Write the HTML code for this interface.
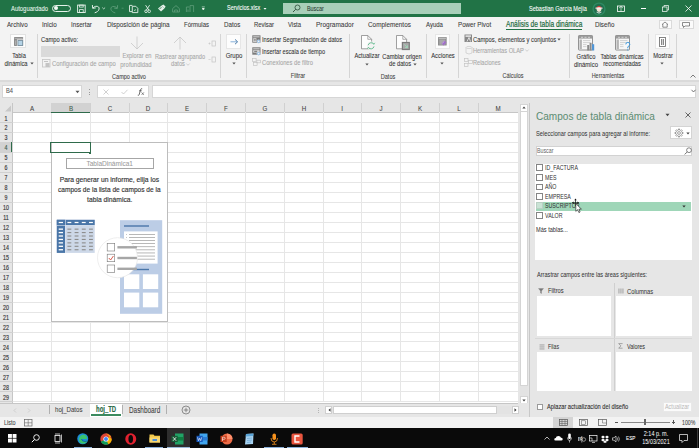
<!DOCTYPE html>
<html><head><meta charset="utf-8"><style>
html,body{margin:0;padding:0;}
body{width:699px;height:448px;overflow:hidden;position:relative;background:#fff;font-family:"Liberation Sans",sans-serif;}
.a{position:absolute;}
.t{position:absolute;white-space:nowrap;font-family:"Liberation Sans",sans-serif;}
svg{overflow:visible;}
</style></head><body>
<div class="a" style="left:0px;top:0px;width:699px;height:16.5px;background:#217346;"></div>
<div class="t" style="top:4.2px;font-size:7.375px;line-height:9.59px;color:#e8f4ec;-webkit-text-stroke:0.08px #e8f4ec;left:11px;transform-origin:0 50%;transform:scaleX(0.8);">Autoguardado</div>
<div class="a" style="left:51.6px;top:4.5px;width:19.0px;height:7.5px;border:1.0px solid #e4f1e9;box-sizing:border-box;border-radius:4px;"></div>
<div class="a" style="left:54.0px;top:6.2px;width:4.1px;height:4.1px;background:#f4faf6;border-radius:50%;"></div>
<svg class="a" style="left:0px;top:0px;" width="699" height="16" viewBox="0 0 699 16">
<rect x="77.6" y="5.1" width="7.6" height="7.4" fill="none" stroke="#e4f1e9" stroke-width="0.95"/>
<rect x="79.6" y="5.1" width="3.6" height="2.0" fill="none" stroke="#e4f1e9" stroke-width="0.8"/>
<rect x="79.6" y="9.6" width="3.6" height="2.9" fill="none" stroke="#e4f1e9" stroke-width="0.8"/>
<path d="M92.4 5.0 L92.7 8.3 L95.8 7.9" fill="none" stroke="#e4f1e9" stroke-width="0.95"/>
<path d="M92.9 8.1 C94.8 5.4 99.6 5.6 99.1 9.0 C98.8 11.0 96.6 12.3 94.7 12.8" fill="none" stroke="#e4f1e9" stroke-width="0.95"/>
<path d="M102.3 7.6 L103.7 8.9 L105.1 7.6" fill="none" stroke="#e4f1e9" stroke-width="0.75"/>
<path d="M117.6 5.2 L117.3 8.5 L114.2 8.1" fill="none" stroke="#5c9c78" stroke-width="0.9"/>
<path d="M117.1 8.3 C115.2 5.6 110.4 5.8 110.9 9.2 C111.2 11.2 113.4 12.5 115.3 12.9" fill="none" stroke="#5c9c78" stroke-width="0.9"/>
<path d="M121.6 8.2 L123.6 8.2" stroke="#5c9c78" stroke-width="0.7"/>
<path d="M132.4 5.4 L129.5 5.4 L129.5 11.6 L132.0 11.6" fill="none" stroke="#e4f1e9" stroke-width="0.9"/>
<path d="M132.3 6.3 L135.8 6.3 L137.8 8.3 L137.8 12.6 L132.3 12.6 Z" fill="none" stroke="#e4f1e9" stroke-width="0.9"/>
<path d="M134.0 10.6 L136.0 9.6" stroke="#e4f1e9" stroke-width="0.7"/>
<path d="M145.6 5.2 L148.8 10.0 M149.6 5.2 L146.4 10.0" stroke="#e4f1e9" stroke-width="0.9" fill="none"/>
<circle cx="146.0" cy="11.3" r="1.3" fill="none" stroke="#e4f1e9" stroke-width="0.85"/>
<circle cx="149.2" cy="11.3" r="1.3" fill="none" stroke="#e4f1e9" stroke-width="0.85"/>
<path d="M158.0 8.4 L161.6 5.6 L164.4 8.6 L161.0 11.6 Z" fill="#e4f1e9"/>
<path d="M161.6 5.6 L163.4 4.4 L165.6 6.5 L164.4 8.6" fill="#e4f1e9"/>
<path d="M159.6 8.6 L161.6 7.6" stroke="#217346" stroke-width="0.8"/>
<path d="M172.6 12 L172.6 8.6 L176 5.6 L179.4 8.6 L179.4 12 Z M174.6 12 L174.6 10 L177.4 10 L177.4 12" fill="none" stroke="#5c9c78" stroke-width="0.85"/>
<path d="M186.4 12 L186.4 7 L189 7 M190 12 L190 5.6 L193.6 5.6 L193.6 12 M188 9.5 L188 12" fill="none" stroke="#5c9c78" stroke-width="0.85"/>
<path d="M201.8 6.9 L204.8 6.9" stroke="#e4f1e9" stroke-width="0.6"/>
<path d="M202.0 8.0 L204.6 8.0 L204.2 9.6 L203.3 10.0 L202.4 9.6 Z" fill="#e4f1e9"/>
</svg>
<div class="t" style="top:4.28px;font-size:6.875px;line-height:8.94px;color:#ffffff;-webkit-text-stroke:0.08px #ffffff;left:226.5px;transform-origin:0 50%;transform:scaleX(0.8);">Servicios.xlsx</div>
<svg class="a" style="left:263px;top:6.5px;" width="4" height="4" viewBox="0 0 4 4"><path d="M0.5 1 L3.5 1 L2 2.8 Z" fill="#fff"/></svg>
<div class="a" style="left:283px;top:2.8px;width:178px;height:11.4px;background:#a8cfb9;"></div>
<svg class="a" style="left:291.5px;top:3.8px;" width="9" height="9" viewBox="0 0 9 9"><circle cx="5.5" cy="3.5" r="2.5" fill="none" stroke="#2b4a38" stroke-width="0.8"/><path d="M3.7 5.3 L1 8" stroke="#2b4a38" stroke-width="0.9"/></svg>
<div class="t" style="top:4.65px;font-size:6.75px;line-height:8.78px;color:#2a3d32;-webkit-text-stroke:0.08px #2a3d32;left:307.4px;transform-origin:0 50%;transform:scaleX(0.8);">Buscar</div>
<div class="t" style="top:4.25px;font-size:6.938px;line-height:9.02px;color:#ffffff;-webkit-text-stroke:0.08px #ffffff;left:529px;transform-origin:0 50%;transform:scaleX(0.8);">Sebastian García Mejía</div>
<svg class="a" style="left:591.5px;top:1.5px;" width="14" height="14" viewBox="0 0 14 14"><circle cx="7" cy="7" r="6.6" fill="#2e8a62"/><circle cx="7" cy="7" r="5.2" fill="#1f6e4c"/><path d="M3.6 6.2 Q7 1.2 10.4 6.2 Z" fill="#d8383a"/><circle cx="7" cy="7.6" r="2.4" fill="#f1e3d3"/><path d="M3.8 9.6 Q7 13.6 10.2 9.6 Q7 11.4 3.8 9.6 Z" fill="#f4f4f4"/><rect x="3.5" y="5.6" width="7" height="1.1" fill="#f4f4f4"/></svg>
<svg class="a" style="left:616.5px;top:4.5px;" width="8" height="8" viewBox="0 0 8 8"><rect x="0.5" y="1" width="7" height="5.5" fill="none" stroke="#fff" stroke-width="0.8"/><path d="M4 1 L4 6.5 M2 3 L4 1.5 L6 3" fill="none" stroke="#fff" stroke-width="0.6"/></svg>
<div class="a" style="left:641px;top:8px;width:4.8px;height:0.8px;background:#fff;"></div>
<svg class="a" style="left:661.5px;top:4.5px;" width="7" height="7" viewBox="0 0 7 7"><rect x="0.5" y="2" width="4.5" height="4.5" fill="none" stroke="#fff" stroke-width="0.7"/><path d="M2 2 L2 0.5 L6.5 0.5 L6.5 5 L5 5" fill="none" stroke="#fff" stroke-width="0.7"/></svg>
<svg class="a" style="left:684.5px;top:4.5px;" width="7" height="7" viewBox="0 0 7 7"><path d="M0.5 0.5 L6.5 6.5 M6.5 0.5 L0.5 6.5" stroke="#fff" stroke-width="0.8"/></svg>
<div class="a" style="left:0px;top:16.5px;width:699px;height:63.2px;background:#f3f3f3;"></div>
<div class="t" style="top:20.2px;font-size:7.725px;line-height:10.04px;color:#3b3b3b;-webkit-text-stroke:0.08px #3b3b3b;left:6.9px;transform-origin:0 50%;transform:scaleX(0.8);">Archivo</div>
<div class="t" style="top:20.11px;font-size:7.875px;line-height:10.24px;color:#3b3b3b;-webkit-text-stroke:0.08px #3b3b3b;left:42px;transform-origin:0 50%;transform:scaleX(0.8);">Inicio</div>
<div class="t" style="top:20.21px;font-size:7.7px;line-height:10.01px;color:#3b3b3b;-webkit-text-stroke:0.08px #3b3b3b;left:70.9px;transform-origin:0 50%;transform:scaleX(0.8);">Insertar</div>
<div class="t" style="top:20.04px;font-size:8.0px;line-height:10.4px;color:#3b3b3b;-webkit-text-stroke:0.08px #3b3b3b;left:106.9px;transform-origin:0 50%;transform:scaleX(0.8);">Disposición de página</div>
<div class="t" style="top:20.33px;font-size:7.5px;line-height:9.75px;color:#3b3b3b;-webkit-text-stroke:0.08px #3b3b3b;left:184px;transform-origin:0 50%;transform:scaleX(0.8);">Fórmulas</div>
<div class="t" style="top:20.15px;font-size:7.8px;line-height:10.14px;color:#3b3b3b;-webkit-text-stroke:0.08px #3b3b3b;left:223.7px;transform-origin:0 50%;transform:scaleX(0.8);">Datos</div>
<div class="t" style="top:20.37px;font-size:7.412px;line-height:9.64px;color:#3b3b3b;-webkit-text-stroke:0.08px #3b3b3b;left:253.8px;transform-origin:0 50%;transform:scaleX(0.8);">Revisar</div>
<div class="t" style="top:20.39px;font-size:7.375px;line-height:9.59px;color:#3b3b3b;-webkit-text-stroke:0.08px #3b3b3b;left:288px;transform-origin:0 50%;transform:scaleX(0.8);">Vista</div>
<div class="t" style="top:19.98px;font-size:8.1px;line-height:10.53px;color:#3b3b3b;-webkit-text-stroke:0.08px #3b3b3b;left:316px;transform-origin:0 50%;transform:scaleX(0.8);">Programador</div>
<div class="t" style="top:20.05px;font-size:7.975px;line-height:10.37px;color:#3b3b3b;-webkit-text-stroke:0.08px #3b3b3b;left:368.4px;transform-origin:0 50%;transform:scaleX(0.8);">Complementos</div>
<div class="t" style="top:20.3px;font-size:7.538px;line-height:9.8px;color:#3b3b3b;-webkit-text-stroke:0.08px #3b3b3b;left:426px;transform-origin:0 50%;transform:scaleX(0.8);">Ayuda</div>
<div class="t" style="top:20.17px;font-size:7.775px;line-height:10.11px;color:#3b3b3b;-webkit-text-stroke:0.08px #3b3b3b;left:458px;transform-origin:0 50%;transform:scaleX(0.8);">Power Pivot</div>
<div class="t" style="top:19.9px;font-size:8.25px;line-height:10.72px;color:#1e6b41;-webkit-text-stroke:0.2px #1e6b41;left:505.7px;transform-origin:0 50%;transform:scaleX(0.8);">Análisis de tabla dinámica</div>
<div class="t" style="top:20.16px;font-size:7.788px;line-height:10.12px;color:#3b3b3b;-webkit-text-stroke:0.08px #3b3b3b;left:594.5px;transform-origin:0 50%;transform:scaleX(0.8);">Diseño</div>
<div class="a" style="left:505.7px;top:29px;width:76.5px;height:1.4px;background:#217346;"></div>
<div class="a" style="left:658.8px;top:19.7px;width:13px;height:9.3px;background:#fbfbfb;border:0.6px solid #dadada;box-sizing:border-box;"></div>
<svg class="a" style="left:661.3px;top:21.2px;" width="8" height="7" viewBox="0 0 8 7"><path d="M1 3.5 L4 1 L7 3.5 M1.8 3 L1.8 6.2 L6.2 6.2 L6.2 3" fill="none" stroke="#444" stroke-width="0.6"/></svg>
<div class="a" style="left:678.8px;top:19.7px;width:15px;height:9.3px;background:#fbfbfb;border:0.6px solid #dadada;box-sizing:border-box;"></div>
<svg class="a" style="left:682.3px;top:21.5px;" width="8" height="6" viewBox="0 0 8 6"><path d="M0.5 0.5 L7.5 0.5 L7.5 4 L3 4 L1.5 5.5 L1.5 4 L0.5 4 Z" fill="none" stroke="#444" stroke-width="0.6"/></svg>
<div class="a" style="left:36.65px;top:33.5px;width:0.8px;height:44.5px;background:#d5d5d5;"></div>
<div class="a" style="left:220.0px;top:33.5px;width:0.8px;height:44.5px;background:#d5d5d5;"></div>
<div class="a" style="left:245.5px;top:33.5px;width:0.8px;height:44.5px;background:#d5d5d5;"></div>
<div class="a" style="left:348.9px;top:33.5px;width:0.8px;height:44.5px;background:#d5d5d5;"></div>
<div class="a" style="left:426.1px;top:33.5px;width:0.8px;height:44.5px;background:#d5d5d5;"></div>
<div class="a" style="left:457.7px;top:33.5px;width:0.8px;height:44.5px;background:#d5d5d5;"></div>
<div class="a" style="left:568.5px;top:33.5px;width:0.8px;height:44.5px;background:#d5d5d5;"></div>
<div class="a" style="left:647.9px;top:33.5px;width:0.8px;height:44.5px;background:#d5d5d5;"></div>
<div class="a" style="left:675.8px;top:33.5px;width:0.8px;height:44.5px;background:#d5d5d5;"></div>
<div class="a" style="left:10.3px;top:33.7px;width:15.8px;height:14.5px;background:#fdfdfd;border:0.5px solid #e2e2e2;box-sizing:border-box;"></div>
<svg class="a" style="left:0px;top:0px;" width="40" height="50" viewBox="0 0 40 50"><rect x="14" y="37" width="9.1" height="8.9" rx="0.6" fill="#8e8e8e"/><rect x="14.6" y="38.0" width="8" height="0.6" fill="#c4c4c4"/><rect x="15.2" y="40.5" width="0.6" height="4.5" fill="#c4c4c4"/><rect x="16.9" y="39.5" width="6.2" height="6.4" fill="#fff"/><rect x="17.5" y="40.1" width="5.6" height="5.8" fill="#6f8796"/><rect x="18.3" y="40.9" width="4.0" height="4.2" fill="#b5d3e6"/></svg>
<div class="t" style="top:51.74px;font-size:7.125px;line-height:9.26px;color:#333333;-webkit-text-stroke:0.08px #333333;left:-81.3px;width:200px;text-align:center;transform-origin:50% 50%;transform:scaleX(0.8);">Tabla</div>
<div class="t" style="top:58.86px;font-size:7.25px;line-height:9.43px;color:#333333;-webkit-text-stroke:0.08px #333333;left:-84px;width:200px;text-align:center;transform-origin:50% 50%;transform:scaleX(0.8);">dinámica</div>
<svg class="a" style="left:29.5px;top:62px;" width="4" height="3" viewBox="0 0 4 3"><path d="M0.3 0.5 L3.7 0.5 L2 2.5 Z" fill="#555"/></svg>
<div class="t" style="top:34.77px;font-size:7.25px;line-height:9.43px;color:#333333;-webkit-text-stroke:0.08px #333333;left:41.2px;transform-origin:0 50%;transform:scaleX(0.8);">Campo activo:</div>
<div class="a" style="left:41.2px;top:46.2px;width:79px;height:10.4px;background:#dadada;"></div>
<svg class="a" style="left:42.3px;top:58.8px;" width="8.5" height="8.5" viewBox="0 0 8.5 8.5"><rect x="0.5" y="0.5" width="7.5" height="7.5" fill="none" stroke="#c4c4c4" stroke-width="0.8"/><rect x="2" y="2" width="4" height="1" fill="#c4c4c4"/><rect x="3.5" y="4" width="4" height="4" fill="#c4c4c4"/></svg>
<div class="t" style="top:58.8px;font-size:7.375px;line-height:9.59px;color:#a6a6a6;-webkit-text-stroke:0.08px #a6a6a6;left:51.7px;transform-origin:0 50%;transform:scaleX(0.8);">Configuración de campo</div>
<svg class="a" style="left:129.5px;top:35.5px;" width="14" height="14" viewBox="0 0 14 14"><path d="M7 0.5 L7 13 M1 7 L7 13 L13 7" fill="none" stroke="#c8c8c8" stroke-width="0.8"/></svg>
<div class="t" style="top:52.34px;font-size:7.125px;line-height:9.26px;color:#a6a6a6;-webkit-text-stroke:0.08px #a6a6a6;left:36.80000000000001px;width:200px;text-align:center;transform-origin:50% 50%;transform:scaleX(0.8);">Explorar en</div>
<div class="t" style="top:60.16px;font-size:7.438px;line-height:9.67px;color:#a6a6a6;-webkit-text-stroke:0.08px #a6a6a6;left:36.400000000000006px;width:200px;text-align:center;transform-origin:50% 50%;transform:scaleX(0.8);">profundidad</div>
<svg class="a" style="left:173px;top:35.5px;" width="14" height="14" viewBox="0 0 14 14"><path d="M7 13.5 L7 1 M1 7 L7 1 L13 7" fill="none" stroke="#c8c8c8" stroke-width="0.8"/></svg>
<div class="t" style="top:52.37px;font-size:7.062px;line-height:9.18px;color:#a6a6a6;-webkit-text-stroke:0.08px #a6a6a6;left:80.1px;width:200px;text-align:center;transform-origin:50% 50%;transform:scaleX(0.8);">Rastrear agrupando</div>
<div class="t" style="top:60.34px;font-size:7.125px;line-height:9.26px;color:#a6a6a6;-webkit-text-stroke:0.08px #a6a6a6;left:77.5px;width:200px;text-align:center;transform-origin:50% 50%;transform:scaleX(0.8);">datos</div>
<svg class="a" style="left:186px;top:63px;" width="4" height="3" viewBox="0 0 4 3"><path d="M0.3 0.5 L2 2.3 L3.7 0.5" fill="none" stroke="#bbb" stroke-width="0.6"/></svg>
<svg class="a" style="left:207.5px;top:39.5px;" width="8" height="7" viewBox="0 0 8 7"><path d="M0.5 3.5 L2.5 3.5 M1.5 2.5 L1.5 4.5" stroke="#c4c4c4" stroke-width="0.6"/><rect x="4" y="1" width="3.5" height="5" fill="none" stroke="#c4c4c4" stroke-width="0.7"/></svg>
<svg class="a" style="left:207.5px;top:55.5px;" width="8" height="7" viewBox="0 0 8 7"><path d="M0.5 3.5 L2.5 3.5" stroke="#c4c4c4" stroke-width="0.6"/><rect x="4" y="1" width="3.5" height="5" fill="none" stroke="#c4c4c4" stroke-width="0.7"/></svg>
<div class="t" style="top:71.65px;font-size:6.938px;line-height:9.02px;color:#444;-webkit-text-stroke:0.08px #444;left:28.80000000000001px;width:200px;text-align:center;transform-origin:50% 50%;transform:scaleX(0.8);">Campo activo</div>
<div class="a" style="left:226.1px;top:33.6px;width:15.3px;height:15.2px;background:#fdfdfd;border:0.5px solid #e6e6e6;box-sizing:border-box;"></div>
<svg class="a" style="left:229.5px;top:38.6px;" width="9" height="6" viewBox="0 0 9 6"><path d="M0.5 2.8 L7.2 2.8" stroke="#7aa9d6" stroke-width="0.9"/><path d="M5.0 0.4 L7.6 2.8 L5.0 5.2" fill="none" stroke="#3d6f9e" stroke-width="0.9"/></svg>
<div class="t" style="top:50.93px;font-size:7.5px;line-height:9.75px;color:#333333;-webkit-text-stroke:0.08px #333333;left:134px;width:200px;text-align:center;transform-origin:50% 50%;transform:scaleX(0.8);">Grupo</div>
<svg class="a" style="left:231.5px;top:62.2px;" width="4" height="3" viewBox="0 0 4 3"><path d="M0.3 0.5 L3.7 0.5 L2 2.5 Z" fill="#555"/></svg>
<svg class="a" style="left:252.3px;top:35.0px;" width="9" height="9" viewBox="0 0 9 9"><rect x="0.3" y="0.3" width="8.2" height="7.4" fill="#7a7a7a"/><rect x="1.2" y="1.2" width="6.4" height="1.2" fill="#c8c8c8"/><rect x="1.2" y="3.2" width="3.2" height="3.8" fill="#e0e0e0"/><rect x="1.8" y="3.9" width="2" height="0.8" fill="#7a7a7a"/><rect x="1.8" y="5.4" width="2" height="0.8" fill="#7a7a7a"/><circle cx="6.6" cy="6.4" r="1.9" fill="#f3f3f3"/><circle cx="6.6" cy="6.4" r="1.3" fill="none" stroke="#4a90d0" stroke-width="0.6"/></svg>
<svg class="a" style="left:252.3px;top:46.6px;" width="9" height="9" viewBox="0 0 9 9"><rect x="0.3" y="0.3" width="8.2" height="7.4" fill="#7a7a7a"/><rect x="1.2" y="1.2" width="6.4" height="1.2" fill="#c8c8c8"/><rect x="1.2" y="3.2" width="6.4" height="2.4" fill="#e0e0e0"/><rect x="2.2" y="3.8" width="3" height="1.1" fill="#7a7a7a"/><circle cx="6.6" cy="6.6" r="1.9" fill="#f3f3f3"/><circle cx="6.6" cy="6.6" r="1.3" fill="none" stroke="#4a90d0" stroke-width="0.6"/></svg>
<svg class="a" style="left:252.3px;top:57.8px;" width="9" height="8" viewBox="0 0 9 8"><rect x="0.5" y="0.5" width="3.6" height="3" fill="none" stroke="#c4c4c4" stroke-width="0.7"/><rect x="4.8" y="2.2" width="3.6" height="2.6" fill="none" stroke="#c4c4c4" stroke-width="0.7"/><rect x="1.5" y="4.6" width="3.6" height="2.8" fill="none" stroke="#c4c4c4" stroke-width="0.7"/></svg>
<div class="t" style="top:34.77px;font-size:7.075px;line-height:9.2px;color:#333333;-webkit-text-stroke:0.08px #333333;left:262px;transform-origin:0 50%;transform:scaleX(0.8);">Insertar Segmentación de datos</div>
<div class="t" style="top:46.59px;font-size:7.037px;line-height:9.15px;color:#333333;-webkit-text-stroke:0.08px #333333;left:262px;transform-origin:0 50%;transform:scaleX(0.8);">Insertar escala de tiempo</div>
<div class="t" style="top:58.09px;font-size:7.212px;line-height:9.38px;color:#a6a6a6;-webkit-text-stroke:0.08px #a6a6a6;left:262px;transform-origin:0 50%;transform:scaleX(0.8);">Conexiones de filtro</div>
<div class="t" style="top:71.56px;font-size:7.088px;line-height:9.21px;color:#444;-webkit-text-stroke:0.08px #444;left:198.2px;width:200px;text-align:center;transform-origin:50% 50%;transform:scaleX(0.8);">Filtrar</div>
<svg class="a" style="left:361.2px;top:35.4px;" width="16" height="16" viewBox="0 0 16 16"><path d="M0.5 0.5 L6.8 0.5 L10.6 4.3 L10.6 13.8 L0.5 13.8 Z" fill="#fdfdfd" stroke="#7a7a7a" stroke-width="0.7"/><path d="M6.8 0.5 L6.8 4.3 L10.6 4.3" fill="none" stroke="#7a7a7a" stroke-width="0.6"/><circle cx="10.1" cy="10.8" r="4.2" fill="#f3f3f3"/><path d="M7.2 10.2 A3 3 0 0 1 12.6 9.0" fill="none" stroke="#5cb88a" stroke-width="0.9"/><path d="M13.0 11.4 A3 3 0 0 1 7.6 12.6" fill="none" stroke="#5cb88a" stroke-width="0.9"/><path d="M11.8 7.9 L12.9 9.3 L13.9 7.8" fill="none" stroke="#5cb88a" stroke-width="0.7"/><path d="M8.4 13.7 L7.3 12.3 L6.3 13.8" fill="none" stroke="#5cb88a" stroke-width="0.7"/></svg>
<svg class="a" style="left:396.0px;top:35.4px;" width="16" height="16" viewBox="0 0 16 16"><path d="M0.5 0.5 L6.8 0.5 L10.6 4.3 L10.6 13.8 L0.5 13.8 Z" fill="#fdfdfd" stroke="#7a7a7a" stroke-width="0.7"/><path d="M6.8 0.5 L6.8 4.3 L10.6 4.3" fill="none" stroke="#7a7a7a" stroke-width="0.6"/><rect x="5.8" y="6.9" width="8.1" height="8.2" fill="#7b7b7b"/><rect x="7.0" y="8.1" width="5.7" height="5.8" fill="#a9a9a9"/><path d="M8.2 9.3 L11.4 12.5 M11.4 10.2 L11.4 12.5 L9.1 12.5" fill="none" stroke="#9ee0bd" stroke-width="0.8"/></svg>
<div class="t" style="top:52.41px;font-size:7.188px;line-height:9.34px;color:#333333;-webkit-text-stroke:0.08px #333333;left:266.8px;width:200px;text-align:center;transform-origin:50% 50%;transform:scaleX(0.8);">Actualizar</div>
<svg class="a" style="left:364.5px;top:63px;" width="4" height="3" viewBox="0 0 4 3"><path d="M0.3 0.5 L3.7 0.5 L2 2.5 Z" fill="#555"/></svg>
<div class="t" style="top:52.38px;font-size:7.225px;line-height:9.39px;color:#333333;-webkit-text-stroke:0.08px #333333;left:301.9px;width:200px;text-align:center;transform-origin:50% 50%;transform:scaleX(0.8);">Cambiar origen</div>
<div class="t" style="top:60.41px;font-size:7.188px;line-height:9.34px;color:#333333;-webkit-text-stroke:0.08px #333333;left:299.5px;width:200px;text-align:center;transform-origin:50% 50%;transform:scaleX(0.8);">de datos</div>
<svg class="a" style="left:412.5px;top:63px;" width="4" height="3" viewBox="0 0 4 3"><path d="M0.3 0.5 L3.7 0.5 L2 2.5 Z" fill="#555"/></svg>
<div class="t" style="top:71.61px;font-size:7.0px;line-height:9.1px;color:#444;-webkit-text-stroke:0.08px #444;left:288px;width:200px;text-align:center;transform-origin:50% 50%;transform:scaleX(0.8);">Datos</div>
<div class="a" style="left:435.2px;top:33.8px;width:14.8px;height:15.0px;background:#fdfdfd;border:0.5px solid #e6e6e6;box-sizing:border-box;"></div>
<svg class="a" style="left:438.2px;top:37.1px;" width="9" height="9" viewBox="0 0 9 9"><rect x="0" y="0" width="8.7" height="8.5" rx="0.5" fill="#8e8e8e"/><rect x="0.8" y="0.7" width="7.1" height="1.1" fill="#c9c9c9"/><rect x="1.3" y="2.5" width="6.0" height="5.2" fill="#a9a9a9"/><path d="M3.6 6.4 L6.4 3.6 L8.4 5.6 L5.6 8.4 Z" fill="#a070c8"/><path d="M4.2 6.4 L6.4 4.3" stroke="#e8d8f4" stroke-width="0.5"/></svg>
<div class="t" style="top:50.97px;font-size:7.25px;line-height:9.43px;color:#333333;-webkit-text-stroke:0.08px #333333;left:342.7px;width:200px;text-align:center;transform-origin:50% 50%;transform:scaleX(0.8);">Acciones</div>
<svg class="a" style="left:440.2px;top:62.2px;" width="4" height="3" viewBox="0 0 4 3"><path d="M0.3 0.5 L3.7 0.5 L2 2.5 Z" fill="#555"/></svg>
<svg class="a" style="left:464px;top:34.3px;" width="8.5" height="8.5" viewBox="0 0 8.5 8.5"><rect x="0.5" y="0.5" width="7.5" height="7.5" fill="#888"/><rect x="1.5" y="1.5" width="5.5" height="1.2" fill="#fff"/><path d="M3 7.5 L5 3.5 L6.5 7.5" fill="none" stroke="#fff" stroke-width="0.7"/></svg>
<div class="t" style="top:35.13px;font-size:7.312px;line-height:9.51px;color:#333333;-webkit-text-stroke:0.08px #333333;left:473.2px;transform-origin:0 50%;transform:scaleX(0.8);">Campos, elementos y conjuntos</div>
<svg class="a" style="left:557.2px;top:37.8px;" width="4" height="3" viewBox="0 0 4 3"><path d="M0.3 0.5 L3.7 0.5 L2 2.5 Z" fill="#555"/></svg>
<svg class="a" style="left:464.5px;top:45.8px;" width="8" height="9" viewBox="0 0 8 9"><ellipse cx="4" cy="1.5" rx="3" ry="1.1" fill="none" stroke="#c8c8c8" stroke-width="0.7"/><path d="M1 1.5 L1 7 Q4 9 7 7 L7 1.5" fill="none" stroke="#c8c8c8" stroke-width="0.7"/></svg>
<div class="t" style="top:46.55px;font-size:7.1px;line-height:9.23px;color:#a6a6a6;-webkit-text-stroke:0.08px #a6a6a6;left:473.2px;transform-origin:0 50%;transform:scaleX(0.8);">Herramientas OLAP</div>
<svg class="a" style="left:525.2px;top:49.2px;" width="4" height="3" viewBox="0 0 4 3"><path d="M0.3 0.5 L2 2.3 L3.7 0.5" fill="none" stroke="#bbb" stroke-width="0.6"/></svg>
<svg class="a" style="left:464px;top:57.5px;" width="9" height="9" viewBox="0 0 9 9"><rect x="0.5" y="0.5" width="3.5" height="3" fill="none" stroke="#c4c4c4" stroke-width="0.7"/><rect x="4.5" y="2.5" width="4" height="3" fill="none" stroke="#c4c4c4" stroke-width="0.7"/><rect x="0.5" y="5.5" width="3.5" height="3" fill="none" stroke="#c4c4c4" stroke-width="0.7"/></svg>
<div class="t" style="top:58.02px;font-size:6.975px;line-height:9.07px;color:#a6a6a6;-webkit-text-stroke:0.08px #a6a6a6;left:473.2px;transform-origin:0 50%;transform:scaleX(0.8);">Relaciones</div>
<div class="t" style="top:71.71px;font-size:6.812px;line-height:8.86px;color:#444;-webkit-text-stroke:0.08px #444;left:413.4px;width:200px;text-align:center;transform-origin:50% 50%;transform:scaleX(0.8);">Cálculos</div>
<svg class="a" style="left:578px;top:35.4px;" width="17" height="16" viewBox="0 0 17 16"><rect x="0.5" y="0.5" width="14" height="14.5" rx="0.6" fill="#f7f7f7" stroke="#7a7a7a" stroke-width="0.8"/><rect x="1" y="1" width="13" height="2.6" fill="#9a9a9a"/><path d="M3 2.3 L5 2.3 M6.5 2.3 L8.5 2.3 M10 2.3 L12 2.3" stroke="#e8e8e8" stroke-width="0.7"/><rect x="1.5" y="4.5" width="2.4" height="9.5" fill="#b4b4b4"/><path d="M5 5.6 L12.5 5.6 M5 7.6 L12.5 7.6 M5 9.6 L8.5 9.6 M5 11.6 L8.5 11.6" stroke="#c2c2c2" stroke-width="0.7"/><rect x="9.2" y="10" width="2" height="5.5" fill="#8a8a8a"/><rect x="11.6" y="7.8" width="2" height="7.7" fill="#8a8a8a"/><rect x="14" y="9.2" width="2.2" height="6.3" fill="#4f95d6"/></svg>
<svg class="a" style="left:615.2px;top:35.4px;" width="17" height="16" viewBox="0 0 17 16"><rect x="0.5" y="0.5" width="14" height="14.5" rx="0.6" fill="#f7f7f7" stroke="#7a7a7a" stroke-width="0.8"/><rect x="1" y="1" width="13" height="2.6" fill="#9a9a9a"/><path d="M3 2.3 L5 2.3 M6.5 2.3 L8.5 2.3 M10 2.3 L12 2.3" stroke="#e8e8e8" stroke-width="0.7"/><rect x="1.5" y="4.5" width="2.4" height="9.5" fill="#b4b4b4"/><path d="M5 5.6 L12.5 5.6 M5 7.6 L12.5 7.6 M5 9.6 L8.5 9.6 M5 11.6 L8.5 11.6" stroke="#c2c2c2" stroke-width="0.7"/><path d="M10.8 9.4 Q10.8 7.4 12.8 7.4 Q14.8 7.4 14.8 9.3 Q14.8 10.8 12.8 11.8 L12.8 13.3" fill="none" stroke="#3f9be0" stroke-width="1.0"/><circle cx="12.8" cy="14.9" r="0.65" fill="#3f9be0"/></svg>
<div class="t" style="top:51.73px;font-size:7.312px;line-height:9.51px;color:#333333;-webkit-text-stroke:0.08px #333333;left:485.9px;width:200px;text-align:center;transform-origin:50% 50%;transform:scaleX(0.8);">Gráfico</div>
<div class="t" style="top:60.13px;font-size:7.5px;line-height:9.75px;color:#333333;-webkit-text-stroke:0.08px #333333;left:485.6px;width:200px;text-align:center;transform-origin:50% 50%;transform:scaleX(0.8);">dinámico</div>
<div class="t" style="top:51.87px;font-size:7.062px;line-height:9.18px;color:#333333;-webkit-text-stroke:0.08px #333333;left:521.6px;width:200px;text-align:center;transform-origin:50% 50%;transform:scaleX(0.8);">Tablas dinámicas</div>
<div class="t" style="top:60.34px;font-size:7.125px;line-height:9.26px;color:#333333;-webkit-text-stroke:0.08px #333333;left:521.9px;width:200px;text-align:center;transform-origin:50% 50%;transform:scaleX(0.8);">recomendadas</div>
<div class="t" style="top:71.71px;font-size:6.812px;line-height:8.86px;color:#444;-webkit-text-stroke:0.08px #444;left:508.1px;width:200px;text-align:center;transform-origin:50% 50%;transform:scaleX(0.8);">Herramientas</div>
<div class="a" style="left:655px;top:34.2px;width:15.4px;height:15.0px;background:#fdfdfd;border:0.5px solid #e6e6e6;box-sizing:border-box;"></div>
<svg class="a" style="left:659.2px;top:37px;" width="7" height="10" viewBox="0 0 7 10"><rect x="0.5" y="0.5" width="6" height="9" fill="#fff" stroke="#666" stroke-width="0.8"/><rect x="2" y="2" width="1.2" height="6" fill="#888"/><rect x="3.8" y="2" width="1.2" height="6" fill="#888"/></svg>
<div class="t" style="top:50.86px;font-size:7.25px;line-height:9.43px;color:#333333;-webkit-text-stroke:0.08px #333333;left:562.6px;width:200px;text-align:center;transform-origin:50% 50%;transform:scaleX(0.8);">Mostrar</div>
<svg class="a" style="left:660.4px;top:62.2px;" width="4" height="3" viewBox="0 0 4 3"><path d="M0.3 0.5 L3.7 0.5 L2 2.5 Z" fill="#555"/></svg>
<svg class="a" style="left:689.5px;top:73.5px;" width="6" height="4" viewBox="0 0 6 4"><path d="M0.5 3.5 L3 1 L5.5 3.5" fill="none" stroke="#444" stroke-width="0.7"/></svg>
<div class="a" style="left:0px;top:79.7px;width:699px;height:23.3px;background:#e6e6e6;"></div>
<div class="a" style="left:0px;top:79.7px;width:699px;height:2.0px;background:#dadada;"></div>
<div class="a" style="left:2.3px;top:85.4px;width:79.3px;height:12.3px;background:#ffffff;border:0.6px solid #d6d6d6;box-sizing:border-box;"></div>
<div class="t" style="top:87.34px;font-size:7.125px;line-height:9.26px;color:#555;-webkit-text-stroke:0.08px #555;left:5.7px;transform-origin:0 50%;transform:scaleX(0.8);">B4</div>
<svg class="a" style="left:74.5px;top:89.5px;" width="5" height="4" viewBox="0 0 5 4"><path d="M0.5 0.8 L4.5 0.8 L2.5 3.2 Z" fill="#555"/></svg>
<div class="a" style="left:88.8px;top:89.3px;width:0.9px;height:0.9px;background:#9a9a9a;"></div>
<div class="a" style="left:88.8px;top:91.5px;width:0.9px;height:0.9px;background:#9a9a9a;"></div>
<div class="a" style="left:88.8px;top:93.7px;width:0.9px;height:0.9px;background:#9a9a9a;"></div>
<div class="a" style="left:96.8px;top:85.4px;width:52.6px;height:12.3px;background:#ffffff;border:0.6px solid #d6d6d6;box-sizing:border-box;"></div>
<svg class="a" style="left:102.5px;top:88.5px;" width="6" height="6" viewBox="0 0 6 6"><path d="M0.5 0.5 L5.5 5.5 M5.5 0.5 L0.5 5.5" stroke="#bdbdbd" stroke-width="0.7"/></svg>
<svg class="a" style="left:120.5px;top:88.5px;" width="7" height="6" viewBox="0 0 7 6"><path d="M0.5 3 L2.5 5 L6.5 0.8" fill="none" stroke="#bdbdbd" stroke-width="0.7"/></svg>
<svg class="a" style="left:137px;top:87.5px;" width="8" height="8" viewBox="0 0 8 8"><path d="M5.2 0.8 Q4.0 0.3 3.6 1.6 L2.2 6.6 Q1.8 7.6 0.8 7.2" fill="none" stroke="#444" stroke-width="0.8"/><path d="M2.0 2.8 L4.8 2.8" stroke="#444" stroke-width="0.7"/><path d="M4.6 4.4 L6.9 6.9 M6.9 4.4 L4.6 6.9" stroke="#444" stroke-width="0.6"/></svg>
<div class="a" style="left:152.2px;top:85.4px;width:544.3px;height:12.3px;background:#ffffff;border:0.6px solid #d6d6d6;box-sizing:border-box;"></div>
<svg class="a" style="left:690.5px;top:89.3px;" width="5" height="4" viewBox="0 0 5 4"><path d="M0.5 0.8 L2.5 3 L4.5 0.8" fill="none" stroke="#555" stroke-width="0.8"/></svg>
<div class="a" style="left:0px;top:103px;width:529.5px;height:300.5px;background:#ffffff;"></div>
<div class="a" style="left:0px;top:102.8px;width:518px;height:9.5px;background:#e6e6e6;"></div>
<div class="a" style="left:0px;top:112.1px;width:518px;height:0.7px;background:#c6c6c6;"></div>
<div class="a" style="left:0px;top:102.8px;width:12.5px;height:300.2px;background:#e6e6e6;"></div>
<div class="a" style="left:12.2px;top:102.8px;width:0.7px;height:300.2px;background:#c6c6c6;"></div>
<svg class="a" style="left:4px;top:104.5px;" width="8" height="7" viewBox="0 0 8 7"><path d="M7 0.5 L7 6.5 L1 6.5 Z" fill="#c8c8c8"/></svg>
<div class="a" style="left:12.5px;top:121.93px;width:505.5px;height:0.7px;background:#e6e6e6;"></div>
<div class="a" style="left:0px;top:121.93px;width:12.5px;height:0.7px;background:#d0d0d0;"></div>
<div class="a" style="left:12.5px;top:131.91px;width:505.5px;height:0.7px;background:#e6e6e6;"></div>
<div class="a" style="left:0px;top:131.91px;width:12.5px;height:0.7px;background:#d0d0d0;"></div>
<div class="a" style="left:12.5px;top:141.89px;width:505.5px;height:0.7px;background:#e6e6e6;"></div>
<div class="a" style="left:0px;top:141.89px;width:12.5px;height:0.7px;background:#d0d0d0;"></div>
<div class="a" style="left:12.5px;top:151.87px;width:505.5px;height:0.7px;background:#e6e6e6;"></div>
<div class="a" style="left:0px;top:151.87px;width:12.5px;height:0.7px;background:#d0d0d0;"></div>
<div class="a" style="left:12.5px;top:161.85px;width:505.5px;height:0.7px;background:#e6e6e6;"></div>
<div class="a" style="left:0px;top:161.85px;width:12.5px;height:0.7px;background:#d0d0d0;"></div>
<div class="a" style="left:12.5px;top:171.83px;width:505.5px;height:0.7px;background:#e6e6e6;"></div>
<div class="a" style="left:0px;top:171.83px;width:12.5px;height:0.7px;background:#d0d0d0;"></div>
<div class="a" style="left:12.5px;top:181.81px;width:505.5px;height:0.7px;background:#e6e6e6;"></div>
<div class="a" style="left:0px;top:181.81px;width:12.5px;height:0.7px;background:#d0d0d0;"></div>
<div class="a" style="left:12.5px;top:191.79px;width:505.5px;height:0.7px;background:#e6e6e6;"></div>
<div class="a" style="left:0px;top:191.79px;width:12.5px;height:0.7px;background:#d0d0d0;"></div>
<div class="a" style="left:12.5px;top:201.77px;width:505.5px;height:0.7px;background:#e6e6e6;"></div>
<div class="a" style="left:0px;top:201.77px;width:12.5px;height:0.7px;background:#d0d0d0;"></div>
<div class="a" style="left:12.5px;top:211.75px;width:505.5px;height:0.7px;background:#e6e6e6;"></div>
<div class="a" style="left:0px;top:211.75px;width:12.5px;height:0.7px;background:#d0d0d0;"></div>
<div class="a" style="left:12.5px;top:221.73px;width:505.5px;height:0.7px;background:#e6e6e6;"></div>
<div class="a" style="left:0px;top:221.73px;width:12.5px;height:0.7px;background:#d0d0d0;"></div>
<div class="a" style="left:12.5px;top:231.71px;width:505.5px;height:0.7px;background:#e6e6e6;"></div>
<div class="a" style="left:0px;top:231.71px;width:12.5px;height:0.7px;background:#d0d0d0;"></div>
<div class="a" style="left:12.5px;top:241.69px;width:505.5px;height:0.7px;background:#e6e6e6;"></div>
<div class="a" style="left:0px;top:241.69px;width:12.5px;height:0.7px;background:#d0d0d0;"></div>
<div class="a" style="left:12.5px;top:251.67px;width:505.5px;height:0.7px;background:#e6e6e6;"></div>
<div class="a" style="left:0px;top:251.67px;width:12.5px;height:0.7px;background:#d0d0d0;"></div>
<div class="a" style="left:12.5px;top:261.65px;width:505.5px;height:0.7px;background:#e6e6e6;"></div>
<div class="a" style="left:0px;top:261.65px;width:12.5px;height:0.7px;background:#d0d0d0;"></div>
<div class="a" style="left:12.5px;top:271.63px;width:505.5px;height:0.7px;background:#e6e6e6;"></div>
<div class="a" style="left:0px;top:271.63px;width:12.5px;height:0.7px;background:#d0d0d0;"></div>
<div class="a" style="left:12.5px;top:281.61px;width:505.5px;height:0.7px;background:#e6e6e6;"></div>
<div class="a" style="left:0px;top:281.61px;width:12.5px;height:0.7px;background:#d0d0d0;"></div>
<div class="a" style="left:12.5px;top:291.59px;width:505.5px;height:0.7px;background:#e6e6e6;"></div>
<div class="a" style="left:0px;top:291.59px;width:12.5px;height:0.7px;background:#d0d0d0;"></div>
<div class="a" style="left:12.5px;top:301.57px;width:505.5px;height:0.7px;background:#e6e6e6;"></div>
<div class="a" style="left:0px;top:301.57px;width:12.5px;height:0.7px;background:#d0d0d0;"></div>
<div class="a" style="left:12.5px;top:311.55px;width:505.5px;height:0.7px;background:#e6e6e6;"></div>
<div class="a" style="left:0px;top:311.55px;width:12.5px;height:0.7px;background:#d0d0d0;"></div>
<div class="a" style="left:12.5px;top:321.53px;width:505.5px;height:0.7px;background:#e6e6e6;"></div>
<div class="a" style="left:0px;top:321.53px;width:12.5px;height:0.7px;background:#d0d0d0;"></div>
<div class="a" style="left:12.5px;top:331.51px;width:505.5px;height:0.7px;background:#e6e6e6;"></div>
<div class="a" style="left:0px;top:331.51px;width:12.5px;height:0.7px;background:#d0d0d0;"></div>
<div class="a" style="left:12.5px;top:341.49px;width:505.5px;height:0.7px;background:#e6e6e6;"></div>
<div class="a" style="left:0px;top:341.49px;width:12.5px;height:0.7px;background:#d0d0d0;"></div>
<div class="a" style="left:12.5px;top:351.47px;width:505.5px;height:0.7px;background:#e6e6e6;"></div>
<div class="a" style="left:0px;top:351.47px;width:12.5px;height:0.7px;background:#d0d0d0;"></div>
<div class="a" style="left:12.5px;top:361.45px;width:505.5px;height:0.7px;background:#e6e6e6;"></div>
<div class="a" style="left:0px;top:361.45px;width:12.5px;height:0.7px;background:#d0d0d0;"></div>
<div class="a" style="left:12.5px;top:371.43px;width:505.5px;height:0.7px;background:#e6e6e6;"></div>
<div class="a" style="left:0px;top:371.43px;width:12.5px;height:0.7px;background:#d0d0d0;"></div>
<div class="a" style="left:12.5px;top:381.41px;width:505.5px;height:0.7px;background:#e6e6e6;"></div>
<div class="a" style="left:0px;top:381.41px;width:12.5px;height:0.7px;background:#d0d0d0;"></div>
<div class="a" style="left:12.5px;top:391.39px;width:505.5px;height:0.7px;background:#e6e6e6;"></div>
<div class="a" style="left:0px;top:391.39px;width:12.5px;height:0.7px;background:#d0d0d0;"></div>
<div class="a" style="left:12.5px;top:401.37px;width:505.5px;height:0.7px;background:#e6e6e6;"></div>
<div class="a" style="left:0px;top:401.37px;width:12.5px;height:0.7px;background:#d0d0d0;"></div>
<div class="a" style="left:50.95px;top:112.3px;width:0.7px;height:290px;background:#e6e6e6;"></div>
<div class="a" style="left:50.95px;top:103px;width:0.7px;height:9.3px;background:#d0d0d0;"></div>
<div class="a" style="left:89.95px;top:112.3px;width:0.7px;height:290px;background:#e6e6e6;"></div>
<div class="a" style="left:89.95px;top:103px;width:0.7px;height:9.3px;background:#d0d0d0;"></div>
<div class="a" style="left:128.65px;top:112.3px;width:0.7px;height:290px;background:#e6e6e6;"></div>
<div class="a" style="left:128.65px;top:103px;width:0.7px;height:9.3px;background:#d0d0d0;"></div>
<div class="a" style="left:167.45px;top:112.3px;width:0.7px;height:290px;background:#e6e6e6;"></div>
<div class="a" style="left:167.45px;top:103px;width:0.7px;height:9.3px;background:#d0d0d0;"></div>
<div class="a" style="left:206.25px;top:112.3px;width:0.7px;height:290px;background:#e6e6e6;"></div>
<div class="a" style="left:206.25px;top:103px;width:0.7px;height:9.3px;background:#d0d0d0;"></div>
<div class="a" style="left:245.05px;top:112.3px;width:0.7px;height:290px;background:#e6e6e6;"></div>
<div class="a" style="left:245.05px;top:103px;width:0.7px;height:9.3px;background:#d0d0d0;"></div>
<div class="a" style="left:283.85px;top:112.3px;width:0.7px;height:290px;background:#e6e6e6;"></div>
<div class="a" style="left:283.85px;top:103px;width:0.7px;height:9.3px;background:#d0d0d0;"></div>
<div class="a" style="left:322.65px;top:112.3px;width:0.7px;height:290px;background:#e6e6e6;"></div>
<div class="a" style="left:322.65px;top:103px;width:0.7px;height:9.3px;background:#d0d0d0;"></div>
<div class="a" style="left:361.45px;top:112.3px;width:0.7px;height:290px;background:#e6e6e6;"></div>
<div class="a" style="left:361.45px;top:103px;width:0.7px;height:9.3px;background:#d0d0d0;"></div>
<div class="a" style="left:400.25px;top:112.3px;width:0.7px;height:290px;background:#e6e6e6;"></div>
<div class="a" style="left:400.25px;top:103px;width:0.7px;height:9.3px;background:#d0d0d0;"></div>
<div class="a" style="left:439.05px;top:112.3px;width:0.7px;height:290px;background:#e6e6e6;"></div>
<div class="a" style="left:439.05px;top:103px;width:0.7px;height:9.3px;background:#d0d0d0;"></div>
<div class="a" style="left:477.85px;top:112.3px;width:0.7px;height:290px;background:#e6e6e6;"></div>
<div class="a" style="left:477.85px;top:103px;width:0.7px;height:9.3px;background:#d0d0d0;"></div>
<div class="a" style="left:51.3px;top:102.8px;width:39px;height:9.5px;background:#d2d2d2;"></div>
<div class="a" style="left:51.3px;top:111.6px;width:39px;height:1.3px;background:#2f6b4b;"></div>
<div class="a" style="left:0px;top:142.24px;width:12.5px;height:9.98px;background:#d2d2d2;"></div>
<div class="a" style="left:11.1px;top:142.24px;width:1.4px;height:9.98px;background:#2f6b4b;"></div>
<div class="t" style="top:104.18px;font-size:7.75px;line-height:10.08px;color:#444;-webkit-text-stroke:0.08px #444;left:-68.1px;width:200px;text-align:center;transform-origin:50% 50%;transform:scaleX(0.8);">A</div>
<div class="t" style="top:104.18px;font-size:7.75px;line-height:10.08px;color:#3d5e4c;-webkit-text-stroke:0.08px #3d5e4c;left:-29.200000000000003px;width:200px;text-align:center;transform-origin:50% 50%;transform:scaleX(0.8);">B</div>
<div class="t" style="top:104.18px;font-size:7.75px;line-height:10.08px;color:#444;-webkit-text-stroke:0.08px #444;left:9.650000000000006px;width:200px;text-align:center;transform-origin:50% 50%;transform:scaleX(0.8);">C</div>
<div class="t" style="top:104.18px;font-size:7.75px;line-height:10.08px;color:#444;-webkit-text-stroke:0.08px #444;left:48.400000000000006px;width:200px;text-align:center;transform-origin:50% 50%;transform:scaleX(0.8);">D</div>
<div class="t" style="top:104.18px;font-size:7.75px;line-height:10.08px;color:#444;-webkit-text-stroke:0.08px #444;left:87.19999999999999px;width:200px;text-align:center;transform-origin:50% 50%;transform:scaleX(0.8);">E</div>
<div class="t" style="top:104.18px;font-size:7.75px;line-height:10.08px;color:#444;-webkit-text-stroke:0.08px #444;left:126.0px;width:200px;text-align:center;transform-origin:50% 50%;transform:scaleX(0.8);">F</div>
<div class="t" style="top:104.18px;font-size:7.75px;line-height:10.08px;color:#444;-webkit-text-stroke:0.08px #444;left:164.8px;width:200px;text-align:center;transform-origin:50% 50%;transform:scaleX(0.8);">G</div>
<div class="t" style="top:104.18px;font-size:7.75px;line-height:10.08px;color:#444;-webkit-text-stroke:0.08px #444;left:203.60000000000002px;width:200px;text-align:center;transform-origin:50% 50%;transform:scaleX(0.8);">H</div>
<div class="t" style="top:104.18px;font-size:7.75px;line-height:10.08px;color:#444;-webkit-text-stroke:0.08px #444;left:242.39999999999998px;width:200px;text-align:center;transform-origin:50% 50%;transform:scaleX(0.8);">I</div>
<div class="t" style="top:104.18px;font-size:7.75px;line-height:10.08px;color:#444;-webkit-text-stroke:0.08px #444;left:281.20000000000005px;width:200px;text-align:center;transform-origin:50% 50%;transform:scaleX(0.8);">J</div>
<div class="t" style="top:104.18px;font-size:7.75px;line-height:10.08px;color:#444;-webkit-text-stroke:0.08px #444;left:320.0px;width:200px;text-align:center;transform-origin:50% 50%;transform:scaleX(0.8);">K</div>
<div class="t" style="top:104.18px;font-size:7.75px;line-height:10.08px;color:#444;-webkit-text-stroke:0.08px #444;left:358.79999999999995px;width:200px;text-align:center;transform-origin:50% 50%;transform:scaleX(0.8);">L</div>
<div class="t" style="top:104.18px;font-size:7.75px;line-height:10.08px;color:#444;-webkit-text-stroke:0.08px #444;left:398.1px;width:200px;text-align:center;transform-origin:50% 50%;transform:scaleX(0.8);">M</div>
<div class="t" style="top:114.5px;font-size:6.466px;line-height:8.41px;color:#333;-webkit-text-stroke:0.14px #333;left:-93.9px;width:200px;text-align:center;transform-origin:50% 50%;transform:scaleX(0.8197);">1</div>
<div class="t" style="top:124.48px;font-size:6.466px;line-height:8.41px;color:#333;-webkit-text-stroke:0.14px #333;left:-93.9px;width:200px;text-align:center;transform-origin:50% 50%;transform:scaleX(0.8197);">2</div>
<div class="t" style="top:134.46px;font-size:6.466px;line-height:8.41px;color:#333;-webkit-text-stroke:0.14px #333;left:-93.9px;width:200px;text-align:center;transform-origin:50% 50%;transform:scaleX(0.8197);">3</div>
<div class="t" style="top:144.44px;font-size:6.466px;line-height:8.41px;color:#3d5e4c;-webkit-text-stroke:0.14px #3d5e4c;left:-93.9px;width:200px;text-align:center;transform-origin:50% 50%;transform:scaleX(0.8197);">4</div>
<div class="t" style="top:154.42px;font-size:6.466px;line-height:8.41px;color:#333;-webkit-text-stroke:0.14px #333;left:-93.9px;width:200px;text-align:center;transform-origin:50% 50%;transform:scaleX(0.8197);">5</div>
<div class="t" style="top:164.4px;font-size:6.466px;line-height:8.41px;color:#333;-webkit-text-stroke:0.14px #333;left:-93.9px;width:200px;text-align:center;transform-origin:50% 50%;transform:scaleX(0.8197);">6</div>
<div class="t" style="top:174.38px;font-size:6.466px;line-height:8.41px;color:#333;-webkit-text-stroke:0.14px #333;left:-93.9px;width:200px;text-align:center;transform-origin:50% 50%;transform:scaleX(0.8197);">7</div>
<div class="t" style="top:184.36px;font-size:6.466px;line-height:8.41px;color:#333;-webkit-text-stroke:0.14px #333;left:-93.9px;width:200px;text-align:center;transform-origin:50% 50%;transform:scaleX(0.8197);">8</div>
<div class="t" style="top:194.34px;font-size:6.466px;line-height:8.41px;color:#333;-webkit-text-stroke:0.14px #333;left:-93.9px;width:200px;text-align:center;transform-origin:50% 50%;transform:scaleX(0.8197);">9</div>
<div class="t" style="top:204.32px;font-size:6.466px;line-height:8.41px;color:#333;-webkit-text-stroke:0.14px #333;left:-93.9px;width:200px;text-align:center;transform-origin:50% 50%;transform:scaleX(0.8197);">10</div>
<div class="t" style="top:214.3px;font-size:6.466px;line-height:8.41px;color:#333;-webkit-text-stroke:0.14px #333;left:-93.9px;width:200px;text-align:center;transform-origin:50% 50%;transform:scaleX(0.8197);">11</div>
<div class="t" style="top:224.28px;font-size:6.466px;line-height:8.41px;color:#333;-webkit-text-stroke:0.14px #333;left:-93.9px;width:200px;text-align:center;transform-origin:50% 50%;transform:scaleX(0.8197);">12</div>
<div class="t" style="top:234.26px;font-size:6.466px;line-height:8.41px;color:#333;-webkit-text-stroke:0.14px #333;left:-93.9px;width:200px;text-align:center;transform-origin:50% 50%;transform:scaleX(0.8197);">13</div>
<div class="t" style="top:244.24px;font-size:6.466px;line-height:8.41px;color:#333;-webkit-text-stroke:0.14px #333;left:-93.9px;width:200px;text-align:center;transform-origin:50% 50%;transform:scaleX(0.8197);">14</div>
<div class="t" style="top:254.22px;font-size:6.466px;line-height:8.41px;color:#333;-webkit-text-stroke:0.14px #333;left:-93.9px;width:200px;text-align:center;transform-origin:50% 50%;transform:scaleX(0.8197);">15</div>
<div class="t" style="top:264.2px;font-size:6.466px;line-height:8.41px;color:#333;-webkit-text-stroke:0.14px #333;left:-93.9px;width:200px;text-align:center;transform-origin:50% 50%;transform:scaleX(0.8197);">16</div>
<div class="t" style="top:274.18px;font-size:6.466px;line-height:8.41px;color:#333;-webkit-text-stroke:0.14px #333;left:-93.9px;width:200px;text-align:center;transform-origin:50% 50%;transform:scaleX(0.8197);">17</div>
<div class="t" style="top:284.16px;font-size:6.466px;line-height:8.41px;color:#333;-webkit-text-stroke:0.14px #333;left:-93.9px;width:200px;text-align:center;transform-origin:50% 50%;transform:scaleX(0.8197);">18</div>
<div class="t" style="top:294.14px;font-size:6.466px;line-height:8.41px;color:#333;-webkit-text-stroke:0.14px #333;left:-93.9px;width:200px;text-align:center;transform-origin:50% 50%;transform:scaleX(0.8197);">19</div>
<div class="t" style="top:304.12px;font-size:6.466px;line-height:8.41px;color:#333;-webkit-text-stroke:0.14px #333;left:-93.9px;width:200px;text-align:center;transform-origin:50% 50%;transform:scaleX(0.8197);">20</div>
<div class="t" style="top:314.1px;font-size:6.466px;line-height:8.41px;color:#333;-webkit-text-stroke:0.14px #333;left:-93.9px;width:200px;text-align:center;transform-origin:50% 50%;transform:scaleX(0.8197);">21</div>
<div class="t" style="top:324.08px;font-size:6.466px;line-height:8.41px;color:#333;-webkit-text-stroke:0.14px #333;left:-93.9px;width:200px;text-align:center;transform-origin:50% 50%;transform:scaleX(0.8197);">22</div>
<div class="t" style="top:334.06px;font-size:6.466px;line-height:8.41px;color:#333;-webkit-text-stroke:0.14px #333;left:-93.9px;width:200px;text-align:center;transform-origin:50% 50%;transform:scaleX(0.8197);">23</div>
<div class="t" style="top:344.04px;font-size:6.466px;line-height:8.41px;color:#333;-webkit-text-stroke:0.14px #333;left:-93.9px;width:200px;text-align:center;transform-origin:50% 50%;transform:scaleX(0.8197);">24</div>
<div class="t" style="top:354.02px;font-size:6.466px;line-height:8.41px;color:#333;-webkit-text-stroke:0.14px #333;left:-93.9px;width:200px;text-align:center;transform-origin:50% 50%;transform:scaleX(0.8197);">25</div>
<div class="t" style="top:364.0px;font-size:6.466px;line-height:8.41px;color:#333;-webkit-text-stroke:0.14px #333;left:-93.9px;width:200px;text-align:center;transform-origin:50% 50%;transform:scaleX(0.8197);">26</div>
<div class="t" style="top:373.98px;font-size:6.466px;line-height:8.41px;color:#333;-webkit-text-stroke:0.14px #333;left:-93.9px;width:200px;text-align:center;transform-origin:50% 50%;transform:scaleX(0.8197);">27</div>
<div class="t" style="top:383.96px;font-size:6.466px;line-height:8.41px;color:#333;-webkit-text-stroke:0.14px #333;left:-93.9px;width:200px;text-align:center;transform-origin:50% 50%;transform:scaleX(0.8197);">28</div>
<div class="t" style="top:393.94px;font-size:6.466px;line-height:8.41px;color:#333;-webkit-text-stroke:0.14px #333;left:-93.9px;width:200px;text-align:center;transform-origin:50% 50%;transform:scaleX(0.8197);">29</div>
<div class="a" style="left:518px;top:102.8px;width:11.5px;height:300.2px;background:#e6e6e6;"></div>
<div class="a" style="left:519.8px;top:104px;width:8px;height:292.6px;background:#e3e3e3;"></div>
<div class="a" style="left:519.8px;top:104px;width:8px;height:282px;background:#ffffff;border:0.6px solid #d4d4d4;box-sizing:border-box;"></div>
<div class="a" style="left:519.8px;top:104px;width:8px;height:7.5px;background:#ffffff;border:0.6px solid #d4d4d4;box-sizing:border-box;"></div>
<svg class="a" style="left:521.8px;top:106px;" width="4" height="3" viewBox="0 0 4 3"><path d="M0.3 2.5 L3.7 2.5 L2 0.5 Z" fill="#444"/></svg>
<div class="a" style="left:520.2px;top:396.4px;width:7.4px;height:7.6px;background:#ffffff;border:0.6px solid #d4d4d4;box-sizing:border-box;"></div>
<svg class="a" style="left:521.9px;top:399.0px;" width="4" height="3" viewBox="0 0 4 3"><path d="M0.3 0.5 L3.7 0.5 L2 2.5 Z" fill="#444"/></svg>
<div class="a" style="left:51.2px;top:142.3px;width:116.6px;height:179.3px;background:#ffffff;border:0.7px solid #bdbdbd;box-sizing:border-box;"></div>
<div class="a" style="left:50.4px;top:142.4px;width:40.2px;height:10.6px;border:1.4px solid #2f6b4b;box-sizing:border-box;"></div>
<div class="a" style="left:89.2px;top:151.8px;width:2.2px;height:2.2px;background:#2f6b4b;"></div>
<div class="a" style="left:65.6px;top:157.6px;width:88.2px;height:11px;background:#ffffff;border:0.9px solid #a6a6a6;box-sizing:border-box;"></div>
<div class="t" style="top:159.86px;font-size:6.56px;line-height:8.53px;color:#9a9a9a;-webkit-text-stroke:0.05px #9a9a9a;left:9.700000000000003px;width:200px;text-align:center;transform-origin:50% 50%;">TablaDinámica1</div>
<div class="t" style="top:175.95px;font-size:6.76px;line-height:8.79px;color:#333;-webkit-text-stroke:0.14px #333;left:9.400000000000006px;width:200px;text-align:center;transform-origin:50% 50%;">Para generar un informe, elija los</div>
<div class="t" style="top:186.26px;font-size:6.57px;line-height:8.54px;color:#333;-webkit-text-stroke:0.14px #333;left:9.299999999999997px;width:200px;text-align:center;transform-origin:50% 50%;">campos de la lista de campos de la</div>
<div class="t" style="top:195.95px;font-size:6.76px;line-height:8.79px;color:#333;-webkit-text-stroke:0.14px #333;left:9.799999999999997px;width:200px;text-align:center;transform-origin:50% 50%;">tabla dinámica.</div>
<svg class="a" style="left:0;top:0" width="699" height="448"><rect x="56.8" y="219.8" width="37.9" height="33.1" fill="#cdd8e8"/><rect x="56.8" y="219.8" width="37.9" height="5.3" fill="#4a76a8"/><rect x="56.8" y="219.8" width="8.2" height="33.1" fill="#4a76a8"/><rect x="65.0" y="219.8" width="0.6" height="33.1" fill="#dfe7f2"/><rect x="56.8" y="225.1" width="37.9" height="0.6" fill="#dfe7f2"/><rect x="58.7" y="221.9" width="4.3" height="1.2" fill="#fff"/><rect x="67.4" y="221.9" width="3.9" height="1.2" fill="#fff"/><rect x="74.60000000000001" y="221.9" width="3.9" height="1.2" fill="#fff"/><rect x="81.80000000000001" y="221.9" width="3.9" height="1.2" fill="#fff"/><rect x="89.0" y="221.9" width="3.9" height="1.2" fill="#fff"/><rect x="58.7" y="228.5" width="4.3" height="1.3" fill="#fff"/><rect x="67.4" y="228.6" width="3.9" height="1.1" fill="#8c8c8c"/><rect x="74.60000000000001" y="228.6" width="3.9" height="1.1" fill="#8c8c8c"/><rect x="81.80000000000001" y="228.6" width="3.9" height="1.1" fill="#8c8c8c"/><rect x="89.0" y="228.6" width="3.9" height="1.1" fill="#8c8c8c"/><rect x="58.7" y="231.93" width="4.3" height="1.3" fill="#fff"/><rect x="67.4" y="232.03" width="3.9" height="1.1" fill="#8c8c8c"/><rect x="74.60000000000001" y="232.03" width="3.9" height="1.1" fill="#8c8c8c"/><rect x="81.80000000000001" y="232.03" width="3.9" height="1.1" fill="#8c8c8c"/><rect x="89.0" y="232.03" width="3.9" height="1.1" fill="#8c8c8c"/><rect x="58.7" y="235.36" width="4.3" height="1.3" fill="#fff"/><rect x="67.4" y="235.46" width="3.9" height="1.1" fill="#8c8c8c"/><rect x="74.60000000000001" y="235.46" width="3.9" height="1.1" fill="#8c8c8c"/><rect x="81.80000000000001" y="235.46" width="3.9" height="1.1" fill="#8c8c8c"/><rect x="89.0" y="235.46" width="3.9" height="1.1" fill="#8c8c8c"/><rect x="58.7" y="238.79" width="4.3" height="1.3" fill="#fff"/><rect x="67.4" y="238.89" width="3.9" height="1.1" fill="#8c8c8c"/><rect x="74.60000000000001" y="238.89" width="3.9" height="1.1" fill="#8c8c8c"/><rect x="81.80000000000001" y="238.89" width="3.9" height="1.1" fill="#8c8c8c"/><rect x="89.0" y="238.89" width="3.9" height="1.1" fill="#8c8c8c"/><rect x="58.7" y="242.22" width="4.3" height="1.3" fill="#fff"/><rect x="67.4" y="242.32" width="3.9" height="1.1" fill="#8c8c8c"/><rect x="74.60000000000001" y="242.32" width="3.9" height="1.1" fill="#8c8c8c"/><rect x="81.80000000000001" y="242.32" width="3.9" height="1.1" fill="#8c8c8c"/><rect x="89.0" y="242.32" width="3.9" height="1.1" fill="#8c8c8c"/><rect x="58.7" y="245.65" width="4.3" height="1.3" fill="#fff"/><rect x="67.4" y="245.75" width="3.9" height="1.1" fill="#8c8c8c"/><rect x="74.60000000000001" y="245.75" width="3.9" height="1.1" fill="#8c8c8c"/><rect x="81.80000000000001" y="245.75" width="3.9" height="1.1" fill="#8c8c8c"/><rect x="89.0" y="245.75" width="3.9" height="1.1" fill="#8c8c8c"/><rect x="58.7" y="249.08" width="4.3" height="1.3" fill="#fff"/><rect x="67.4" y="249.18" width="3.9" height="1.1" fill="#8c8c8c"/><rect x="74.60000000000001" y="249.18" width="3.9" height="1.1" fill="#8c8c8c"/><rect x="81.80000000000001" y="249.18" width="3.9" height="1.1" fill="#8c8c8c"/><rect x="89.0" y="249.18" width="3.9" height="1.1" fill="#8c8c8c"/><rect x="120" y="220.2" width="42.2" height="93.6" fill="#bccde6"/><rect x="124" y="225.3" width="25" height="1.4" fill="#4a76a8"/><rect x="124" y="231.4" width="33.6" height="32.2" fill="#fff"/><rect x="129" y="234.0" width="26" height="0.7" fill="#9a9a9a"/><rect x="126.2" y="234.0" width="0.8" height="0.7" fill="#9a9a9a"/><rect x="129" y="237.1" width="26" height="0.7" fill="#9a9a9a"/><rect x="126.2" y="237.1" width="0.8" height="0.7" fill="#9a9a9a"/><rect x="129" y="240.2" width="26" height="0.7" fill="#9a9a9a"/><rect x="126.2" y="240.2" width="0.8" height="0.7" fill="#9a9a9a"/><rect x="129" y="243.3" width="26" height="0.7" fill="#9a9a9a"/><rect x="126.2" y="243.3" width="0.8" height="0.7" fill="#9a9a9a"/><rect x="129" y="246.4" width="26" height="0.7" fill="#9a9a9a"/><rect x="126.2" y="246.4" width="0.8" height="0.7" fill="#9a9a9a"/><rect x="129" y="249.5" width="26" height="0.7" fill="#9a9a9a"/><rect x="126.2" y="249.5" width="0.8" height="0.7" fill="#9a9a9a"/><rect x="129" y="252.6" width="26" height="0.7" fill="#9a9a9a"/><rect x="126.2" y="252.6" width="0.8" height="0.7" fill="#9a9a9a"/><rect x="129" y="255.7" width="26" height="0.7" fill="#9a9a9a"/><rect x="126.2" y="255.7" width="0.8" height="0.7" fill="#9a9a9a"/><rect x="129" y="258.8" width="26" height="0.7" fill="#9a9a9a"/><rect x="126.2" y="258.8" width="0.8" height="0.7" fill="#9a9a9a"/><rect x="133.5" y="268.8" width="15.5" height="1.4" fill="#4a76a8"/><rect x="124" y="274.3" width="15.3" height="14.7" fill="#fff"/><rect x="142.9" y="274.3" width="15.3" height="14.7" fill="#fff"/><rect x="124" y="292.6" width="15.3" height="14.7" fill="#fff"/><rect x="142.9" y="292.6" width="15.3" height="14.7" fill="#fff"/><circle cx="117.5" cy="257.7" r="20" fill="#fff" stroke="#e3e3e3" stroke-width="0.6"/><rect x="107.2" y="243.5" width="7.5" height="7.5" fill="#fff" stroke="#777" stroke-width="0.6"/><rect x="117.4" y="246.1" width="19.5" height="2.4" fill="#a6a6a6"/><rect x="107.2" y="254.2" width="7.5" height="7.5" fill="#fff" stroke="#777" stroke-width="0.6"/><rect x="117.4" y="256.8" width="19.5" height="2.4" fill="#a6a6a6"/><rect x="107.2" y="265.0" width="7.5" height="7.5" fill="#fff" stroke="#777" stroke-width="0.6"/><rect x="117.4" y="267.6" width="19.5" height="2.4" fill="#a6a6a6"/><path d="M108.8 258 L110.6 260 L113.4 256" fill="none" stroke="#d24a3a" stroke-width="0.9"/></svg>
<div class="a" style="left:0px;top:403.0px;width:529.5px;height:14px;background:#e6e6e6;"></div>
<div class="a" style="left:0px;top:403.0px;width:518px;height:0.8px;background:#c6c6c6;"></div>
<svg class="a" style="left:12.5px;top:407.6px;" width="4" height="5" viewBox="0 0 4 5"><path d="M3 0.5 L1 2.5 L3 4.5" fill="none" stroke="#c0c0c0" stroke-width="0.6"/></svg>
<svg class="a" style="left:26.5px;top:407.6px;" width="4" height="5" viewBox="0 0 4 5"><path d="M1 0.5 L3 2.5 L1 4.5" fill="none" stroke="#c0c0c0" stroke-width="0.6"/></svg>
<div class="a" style="left:48.9px;top:405.2px;width:0.6px;height:9px;background:#b0b0b0;"></div>
<div class="a" style="left:122.3px;top:405.2px;width:0.6px;height:9px;background:#b0b0b0;"></div>
<div class="a" style="left:166.1px;top:405.2px;width:0.6px;height:9px;background:#b0b0b0;"></div>
<div class="a" style="left:90.1px;top:403.5px;width:32.2px;height:13.3px;background:#ffffff;"></div>
<div class="a" style="left:90.6px;top:414.3px;width:30.8px;height:1.3px;background:#3b8a5e;"></div>
<div class="t" style="top:405.41px;font-size:8.052px;line-height:10.47px;color:#444;-webkit-text-stroke:0.08px #444;left:55.4px;transform-origin:0 50%;transform:scaleX(0.7576);">hoj_Datos</div>
<div class="t" style="top:405.32px;font-size:8.211px;line-height:10.67px;color:#2b6b48;font-weight:bold;-webkit-text-stroke:0.15px #2b6b48;left:95.8px;transform-origin:0 50%;transform:scaleX(0.7246);">hoj_TD</div>
<div class="t" style="top:405.19px;font-size:8.448px;line-height:10.98px;color:#444;-webkit-text-stroke:0.08px #444;left:128.8px;transform-origin:0 50%;transform:scaleX(0.7576);">Dashboard</div>
<svg class="a" style="left:181px;top:405.2px;" width="10" height="10" viewBox="0 0 10 10"><circle cx="5" cy="5" r="4" fill="none" stroke="#666" stroke-width="0.7"/><path d="M5 2.8 L5 7.2 M2.8 5 L7.2 5" stroke="#666" stroke-width="0.7"/></svg>
<div class="a" style="left:317.5px;top:407.9px;width:0.8px;height:0.8px;background:#b5b5b5;"></div>
<div class="a" style="left:317.5px;top:409.9px;width:0.8px;height:0.8px;background:#b5b5b5;"></div>
<div class="a" style="left:317.5px;top:411.9px;width:0.8px;height:0.8px;background:#b5b5b5;"></div>
<div class="a" style="left:325.4px;top:406.3px;width:193.0px;height:7.9px;background:#e3e3e3;"></div>
<div class="a" style="left:325.4px;top:406.3px;width:7.0px;height:7.9px;background:#ffffff;border:0.6px solid #cfcfcf;box-sizing:border-box;"></div>
<svg class="a" style="left:327.6px;top:408.4px;" width="3" height="4" viewBox="0 0 3 4"><path d="M2.5 0.3 L2.5 3.7 L0.5 2 Z" fill="#333"/></svg>
<div class="a" style="left:332.5px;top:406.3px;width:164.7px;height:7.9px;background:#ffffff;border:0.6px solid #cfcfcf;box-sizing:border-box;"></div>
<div class="a" style="left:512.0px;top:406.3px;width:6.5px;height:7.9px;background:#ffffff;border:0.6px solid #cfcfcf;box-sizing:border-box;"></div>
<svg class="a" style="left:513.9px;top:408.4px;" width="3" height="4" viewBox="0 0 3 4"><path d="M0.5 0.3 L0.5 3.7 L2.5 2 Z" fill="#333"/></svg>
<div class="a" style="left:529.5px;top:102.8px;width:169.5px;height:314.2px;background:#e6e6e6;"></div>
<div class="a" style="left:529.3px;top:102.8px;width:0.7px;height:314.2px;background:#c8c8c8;"></div>
<div class="t" style="top:109.67px;font-size:10.05px;line-height:13.07px;color:#5b8c72;left:536px;transform-origin:0 50%;">Campos de tabla dinámica</div>
<svg class="a" style="left:664.5px;top:112.8px;" width="5" height="4" viewBox="0 0 5 4"><path d="M0.5 0.8 L4.5 0.8 L2.5 3.2 Z" fill="#444"/></svg>
<svg class="a" style="left:684.5px;top:111.5px;" width="6" height="6" viewBox="0 0 6 6"><path d="M0.5 0.5 L5.5 5.5 M5.5 0.5 L0.5 5.5" stroke="#444" stroke-width="0.8"/></svg>
<div class="t" style="top:129.73px;font-size:7.15px;line-height:9.29px;color:#333;-webkit-text-stroke:0.03px #333;left:536px;transform-origin:0 50%;transform:scaleX(0.8);">Seleccionar campos para agregar al informe:</div>
<div class="a" style="left:670.3px;top:126.3px;width:21.8px;height:13.2px;background:#ffffff;border:0.6px solid #d4d4d4;box-sizing:border-box;"></div>
<svg class="a" style="left:674.2px;top:128.0px;" width="10" height="10" viewBox="0 0 10 10"><path d="M7.93 4.35 L9.07 4.51 L9.07 5.49 L7.93 5.65 L7.53 6.61 L8.23 7.53 L7.53 8.23 L6.61 7.53 L5.65 7.93 L5.49 9.07 L4.51 9.07 L4.35 7.93 L3.39 7.53 L2.47 8.23 L1.77 7.53 L2.47 6.61 L2.07 5.65 L0.93 5.49 L0.93 4.51 L2.07 4.35 L2.47 3.39 L1.77 2.47 L2.47 1.77 L3.39 2.47 L4.35 2.07 L4.51 0.93 L5.49 0.93 L5.65 2.07 L6.61 2.47 L7.53 1.77 L8.23 2.47 L7.53 3.39 Z" fill="none" stroke="#666" stroke-width="0.6"/><circle cx="5" cy="5" r="1.4" fill="none" stroke="#666" stroke-width="0.6"/></svg>
<svg class="a" style="left:686.2px;top:132.2px;" width="4" height="3" viewBox="0 0 4 3"><path d="M0.3 0.5 L3.7 0.5 L2 2.5 Z" fill="#444"/></svg>
<div class="a" style="left:535.5px;top:146.3px;width:156.6px;height:9.6px;background:#ffffff;border:0.6px solid #d2d2d2;box-sizing:border-box;"></div>
<div class="t" style="top:147.32px;font-size:6.625px;line-height:8.61px;color:#666;left:536.8px;transform-origin:0 50%;transform:scaleX(0.8);">Buscar</div>
<svg class="a" style="left:684px;top:147.2px;" width="8" height="8" viewBox="0 0 8 8"><circle cx="5.0" cy="3.2" r="2.4" fill="none" stroke="#555" stroke-width="0.7"/><path d="M3.3 4.9 L0.6 7.4" stroke="#555" stroke-width="0.8"/></svg>
<div class="a" style="left:534.5px;top:163.7px;width:157px;height:96.2px;background:#ffffff;"></div>
<div class="a" style="left:535.5px;top:201.6px;width:155.8px;height:9.5px;background:#9fd6b8;"></div>
<div class="a" style="left:536.2px;top:164.4px;width:6.6px;height:6.6px;background:#ffffff;border:0.6px solid #858585;box-sizing:border-box;"></div>
<div class="t" style="top:164.03px;font-size:6.625px;line-height:8.61px;color:#333;-webkit-text-stroke:0.03px #333;left:545.4px;transform-origin:0 50%;transform:scaleX(0.8);">ID_FACTURA</div>
<div class="a" style="left:536.2px;top:174.0px;width:6.6px;height:6.6px;background:#ffffff;border:0.6px solid #858585;box-sizing:border-box;"></div>
<div class="t" style="top:173.62px;font-size:6.625px;line-height:8.61px;color:#333;-webkit-text-stroke:0.03px #333;left:545.4px;transform-origin:0 50%;transform:scaleX(0.8);">MES</div>
<div class="a" style="left:536.2px;top:183.6px;width:6.6px;height:6.6px;background:#ffffff;border:0.6px solid #858585;box-sizing:border-box;"></div>
<div class="t" style="top:183.22px;font-size:6.625px;line-height:8.61px;color:#333;-webkit-text-stroke:0.03px #333;left:545.4px;transform-origin:0 50%;transform:scaleX(0.8);">AÑO</div>
<div class="a" style="left:536.2px;top:193.1px;width:6.6px;height:6.6px;background:#ffffff;border:0.6px solid #858585;box-sizing:border-box;"></div>
<div class="t" style="top:192.72px;font-size:6.625px;line-height:8.61px;color:#333;-webkit-text-stroke:0.03px #333;left:545.4px;transform-origin:0 50%;transform:scaleX(0.8);">EMPRESA</div>
<div class="a" style="left:536.2px;top:202.4px;width:6.6px;height:6.6px;background:#c9e3d5;border:0.6px solid #b9cfc3;box-sizing:border-box;"></div>
<div class="t" style="top:202.22px;font-size:6.625px;line-height:8.61px;color:#333;-webkit-text-stroke:0.03px #333;left:545.4px;transform-origin:0 50%;transform:scaleX(0.8);">SUSCRIPTOR</div>
<div class="a" style="left:536.2px;top:212.2px;width:6.6px;height:6.6px;background:#ffffff;border:0.6px solid #858585;box-sizing:border-box;"></div>
<div class="t" style="top:211.82px;font-size:6.625px;line-height:8.61px;color:#333;-webkit-text-stroke:0.03px #333;left:545.4px;transform-origin:0 50%;transform:scaleX(0.8);">VALOR</div>
<svg class="a" style="left:681.5px;top:204.5px;" width="4" height="3" viewBox="0 0 4 3"><path d="M0.3 0.5 L3.7 0.5 L2 2.5 Z" fill="#333"/></svg>
<div class="t" style="top:225.21px;font-size:7.0px;line-height:9.1px;color:#333;-webkit-text-stroke:0.03px #333;left:536.2px;transform-origin:0 50%;transform:scaleX(0.8);">Más tablas...</div>
<svg class="a" style="left:568px;top:194px;" width="16" height="20" viewBox="0 0 16 20"><path d="M7.5 5.5 L7.5 12 M4.2 8.8 L10.8 8.8" stroke="#111" stroke-width="0.7"/><path d="M7.5 4.4 L6.3 6.2 L8.7 6.2 Z M4.0 8.8 L5.6 7.6 L5.6 10.0 Z M11.0 8.8 L9.4 7.6 L9.4 10.0 Z" fill="#111"/><path d="M7.8 9.4 L7.8 17.4 L9.6 15.7 L10.9 18.6 L12.1 18.0 L10.9 15.2 L13.4 15.2 Z" fill="#fff" stroke="#111" stroke-width="0.6"/></svg>
<div class="t" style="top:269.7px;font-size:7.025px;line-height:9.13px;color:#333;-webkit-text-stroke:0.03px #333;left:537px;transform-origin:0 50%;transform:scaleX(0.8);">Arrastrar campos entre las áreas siguientes:</div>
<div class="a" style="left:613.8px;top:283px;width:0.8px;height:108px;background:#cfcfcf;"></div>
<div class="a" style="left:535px;top:338.2px;width:157px;height:0.8px;background:#d8d8d8;"></div>
<svg class="a" style="left:538.3px;top:287.6px;" width="6" height="6" viewBox="0 0 6 6"><path d="M0.5 0.5 L5.5 0.5 L3.5 3 L3.5 5.5 L2.5 5 L2.5 3 Z" fill="#777" stroke="#777" stroke-width="0.3"/></svg>
<div class="t" style="top:286.71px;font-size:7.188px;line-height:9.34px;color:#333;-webkit-text-stroke:0.03px #333;left:548px;transform-origin:0 50%;transform:scaleX(0.8);">Filtros</div>
<svg class="a" style="left:618px;top:287.8px;" width="6" height="6" viewBox="0 0 6 6"><rect x="0.5" y="0.5" width="0.9" height="5" fill="#9a9a9a"/><rect x="2.5" y="0.5" width="0.9" height="5" fill="#9a9a9a"/><rect x="4.5" y="0.5" width="0.9" height="5" fill="#9a9a9a"/></svg>
<div class="t" style="top:286.65px;font-size:7.275px;line-height:9.46px;color:#333;-webkit-text-stroke:0.03px #333;left:627px;transform-origin:0 50%;transform:scaleX(0.8);">Columnas</div>
<svg class="a" style="left:538.8px;top:343.6px;" width="6" height="6" viewBox="0 0 6 6"><rect x="0.5" y="0.5" width="5" height="0.9" fill="#9a9a9a"/><rect x="0.5" y="2.5" width="5" height="0.9" fill="#9a9a9a"/><rect x="0.5" y="4.5" width="5" height="0.9" fill="#9a9a9a"/></svg>
<div class="t" style="top:342.86px;font-size:6.562px;line-height:8.53px;color:#333;-webkit-text-stroke:0.03px #333;left:548px;transform-origin:0 50%;transform:scaleX(0.8);">Filas</div>
<svg class="a" style="left:617.6px;top:343.2px;" width="6" height="6" viewBox="0 0 6 6"><path d="M4.6 0.6 L0.7 0.6 L2.9 2.9 L0.7 5.2 L4.6 5.2" fill="none" stroke="#777" stroke-width="0.6"/></svg>
<div class="t" style="top:342.71px;font-size:6.812px;line-height:8.86px;color:#333;-webkit-text-stroke:0.03px #333;left:627px;transform-origin:0 50%;transform:scaleX(0.8);">Valores</div>
<div class="a" style="left:537px;top:296.2px;width:73.9px;height:39.4px;background:#ffffff;"></div>
<div class="a" style="left:615.9px;top:296.2px;width:75.9px;height:39.4px;background:#ffffff;"></div>
<div class="a" style="left:537px;top:352.2px;width:73.9px;height:38.6px;background:#ffffff;"></div>
<div class="a" style="left:615.5px;top:352.2px;width:76.2px;height:38.6px;background:#ffffff;"></div>
<div class="a" style="left:537px;top:403.5px;width:6.2px;height:6.3px;background:#ffffff;border:0.6px solid #9a9a9a;box-sizing:border-box;"></div>
<div class="t" style="top:402.54px;font-size:7.125px;line-height:9.26px;color:#2e2e2e;-webkit-text-stroke:0.1px #2e2e2e;left:546.5px;transform-origin:0 50%;transform:scaleX(0.8);">Aplazar actualización del diseño</div>
<div class="a" style="left:662.8px;top:401.7px;width:28.9px;height:10px;background:#fbfbfb;border:0.5px solid #e8e8e8;box-sizing:border-box;"></div>
<div class="t" style="top:402.98px;font-size:6.875px;line-height:8.94px;color:#b8b8b8;left:577.2px;width:200px;text-align:center;transform-origin:50% 50%;transform:scaleX(0.8);">Actualizar</div>
<div class="a" style="left:0px;top:417.0px;width:699px;height:10.6px;background:#f3f3f3;"></div>
<div class="t" style="top:418.88px;font-size:6.875px;line-height:8.94px;color:#444;-webkit-text-stroke:0.08px #444;left:3.9px;transform-origin:0 50%;transform:scaleX(0.8);">Listo</div>
<svg class="a" style="left:24px;top:418.5px;" width="8.5" height="7.5" viewBox="0 0 8.5 7.5"><rect x="0.5" y="0.5" width="7.5" height="6.5" fill="none" stroke="#666" stroke-width="0.7"/><path d="M0.5 3.8 L8 3.8 M4.2 0.5 L4.2 7" stroke="#666" stroke-width="0.6"/></svg>
<div class="a" style="left:553.3px;top:417.2px;width:19.4px;height:10.4px;background:#d4d4d4;"></div>
<svg class="a" style="left:558.5px;top:418.5px;" width="9" height="7" viewBox="0 0 9 7"><rect x="0.5" y="0.5" width="8" height="6" fill="none" stroke="#555" stroke-width="0.7"/><path d="M0.5 2.5 L8.5 2.5 M0.5 4.5 L8.5 4.5 M3 0.5 L3 6.5 M6 0.5 L6 6.5" stroke="#555" stroke-width="0.5"/></svg>
<svg class="a" style="left:578.5px;top:418.5px;" width="9" height="7" viewBox="0 0 9 7"><rect x="0.5" y="0.5" width="8" height="6" fill="none" stroke="#555" stroke-width="0.7"/><rect x="2.5" y="1.8" width="4" height="3.5" fill="none" stroke="#555" stroke-width="0.5"/></svg>
<svg class="a" style="left:597.5px;top:418.5px;" width="9" height="7" viewBox="0 0 9 7"><rect x="0.5" y="0.5" width="8" height="6" fill="none" stroke="#555" stroke-width="0.7"/><path d="M4.5 0.5 L4.5 4 L8.5 4" fill="none" stroke="#555" stroke-width="0.5"/></svg>
<div class="a" style="left:614.8px;top:422px;width:3.2px;height:0.6px;background:#555;"></div>
<div class="a" style="left:621px;top:422px;width:48.5px;height:0.6px;background:#888;"></div>
<div class="a" style="left:644.3px;top:419.3px;width:2.2px;height:6.0px;background:#666;"></div>
<div class="a" style="left:672px;top:422px;width:3.4px;height:0.6px;background:#555;"></div>
<div class="a" style="left:673.4px;top:420.3px;width:0.6px;height:3.4px;background:#555;"></div>
<div class="t" style="top:418.59px;font-size:6.5px;line-height:8.45px;color:#444;-webkit-text-stroke:0.08px #444;left:681.7px;transform-origin:0 50%;transform:scaleX(0.8);">100%</div>
<div class="a" style="left:0px;top:427.6px;width:699px;height:20.4px;background:#0a0a0a;"></div>
<svg class="a" style="left:7.7px;top:434px;" width="8.5" height="8.5" viewBox="0 0 8.5 8.5"><rect x="0" y="0" width="3.9" height="3.9" fill="#fff"/><rect x="4.6" y="0" width="3.9" height="3.9" fill="#fff"/><rect x="0" y="4.6" width="3.9" height="3.9" fill="#fff"/><rect x="4.6" y="4.6" width="3.9" height="3.9" fill="#fff"/></svg>
<svg class="a" style="left:31px;top:433.5px;" width="9" height="9" viewBox="0 0 9 9"><circle cx="5.5" cy="3.5" r="2.8" fill="none" stroke="#fff" stroke-width="0.9"/><path d="M3.5 5.5 L0.8 8.2" stroke="#fff" stroke-width="1"/></svg>
<svg class="a" style="left:53.5px;top:434px;" width="9.5" height="9" viewBox="0 0 9.5 9"><rect x="1" y="1.5" width="5" height="6" fill="none" stroke="#fff" stroke-width="0.8"/><path d="M7.5 0.5 L7.5 8.5 M1 0 L6 0 M1 9 L6 9" stroke="#fff" stroke-width="0.7"/></svg>
<svg class="a" style="left:77.3px;top:432.5px;" width="11.5" height="11.5" viewBox="0 0 11.5 11.5"><circle cx="5.75" cy="5.75" r="5.5" fill="#1c8fd6"/><path d="M2 6 Q3 1.5 7 1.8 Q10.5 2.5 10 6 L4.5 6 Q5 8.5 8 8.5 Q9.5 8.5 10.5 7.5 Q9 11 5.5 10.8 Q1.8 10.2 2 6 Z" fill="#39c46e"/><path d="M4.5 6 Q5 8.5 8 8.5 Q9.5 8.5 10.5 7.5" fill="none" stroke="#0f5e9c" stroke-width="0.8"/></svg>
<div class="a" style="left:73.5px;top:446.6px;width:18.5px;height:1.4px;background:#8aafd8;"></div>
<svg class="a" style="left:100.4px;top:432.5px;" width="12" height="12" viewBox="0 0 12 12"><circle cx="6" cy="6" r="5.7" fill="#db4437"/><path d="M6 6 L0.8 8.8 A5.7 5.7 0 0 0 8.5 11.2 Z" fill="#0f9d58"/><path d="M6 6 L8.5 11.2 A5.7 5.7 0 0 0 11.7 6 L6 0.3 L11.2 3.3 Z" fill="#f4b400"/><circle cx="6" cy="6" r="2.6" fill="#fff"/><circle cx="6" cy="6" r="2" fill="#4285f4"/></svg>
<svg class="a" style="left:125px;top:432.5px;" width="11.5" height="12" viewBox="0 0 11.5 12"><ellipse cx="5.75" cy="6" rx="5.5" ry="5.8" fill="#e0212f"/><ellipse cx="5.75" cy="6" rx="2.3" ry="4" fill="#0a0a0a"/></svg>
<svg class="a" style="left:148.9px;top:433px;" width="11.5" height="10" viewBox="0 0 11.5 10"><path d="M0.5 1.5 L4.5 1.5 L5.5 2.8 L11 2.8 L11 9.5 L0.5 9.5 Z" fill="#f2c94c"/><rect x="0.5" y="4.5" width="10.5" height="5" fill="#f7d774"/><rect x="3.5" y="6" width="4.5" height="2" fill="#4a90d9"/></svg>
<div class="a" style="left:144.9px;top:446.6px;width:18.2px;height:1.4px;background:#8aafd8;"></div>
<div class="a" style="left:166.8px;top:427.6px;width:23.1px;height:20.4px;background:#2e2e2e;"></div>
<svg class="a" style="left:170.6px;top:432.5px;" width="13" height="12" viewBox="0 0 13 12"><rect x="4" y="0.5" width="8.5" height="11" fill="#21a366"/><rect x="4" y="4" width="8.5" height="3.5" fill="#107c41"/><rect x="0.5" y="2.8" width="6.2" height="6.2" fill="#185c37"/><path d="M2 4.2 L5.2 7.8 M5.2 4.2 L2 7.8" stroke="#fff" stroke-width="0.8"/></svg>
<div class="a" style="left:166.8px;top:446.6px;width:23.1px;height:1.4px;background:#9ab8d8;"></div>
<svg class="a" style="left:196.4px;top:432.5px;" width="12" height="12" viewBox="0 0 12 12"><rect x="3.5" y="0.5" width="8" height="11" fill="#41a5ee"/><rect x="3.5" y="4" width="8" height="3.5" fill="#2b7cd3"/><rect x="0.5" y="2.8" width="6.2" height="6.2" fill="#185abd"/><path d="M1.5 4.3 L2.5 7.7 L3.6 5.3 L4.7 7.7 L5.7 4.3" fill="none" stroke="#fff" stroke-width="0.6"/></svg>
<svg class="a" style="left:219.5px;top:432.5px;" width="12.5" height="12" viewBox="0 0 12.5 12"><circle cx="7" cy="6" r="5.5" fill="#ed6c47"/><path d="M7 0.5 A5.5 5.5 0 0 1 12.5 6 L7 6 Z" fill="#ff8f6b"/><rect x="0.5" y="2.8" width="6.2" height="6.2" fill="#c43e1c"/><path d="M2.5 8 L2.5 4.2 L4.2 4.2 Q5.2 4.2 5.2 5.3 Q5.2 6.3 4.2 6.3 L2.5 6.3" fill="none" stroke="#fff" stroke-width="0.6"/></svg>
<svg class="a" style="left:244px;top:432.5px;" width="10.5" height="12" viewBox="0 0 10.5 12"><path d="M2 1 L9.5 0.5 L9 11 L1 11.5 Z" fill="#a7d2ef"/><path d="M2 1 L9.5 0.5 L9 3 L1.6 3.5 Z" fill="#5ba4d6"/><path d="M3 5.5 L8 5 M3 7.5 L8 7 M3 9.5 L7 9" stroke="#4e8fc4" stroke-width="0.5"/></svg>
<svg class="a" style="left:269.5px;top:432.5px;" width="8.5" height="12" viewBox="0 0 8.5 12"><rect x="2.5" y="0.5" width="3.5" height="6.5" rx="1.7" fill="#f7931e"/><path d="M1 5 Q1 9 4.25 9 Q7.5 9 7.5 5" fill="none" stroke="#f7931e" stroke-width="0.8"/><path d="M4.25 9 L4.25 11 M2 11.3 L6.5 11.3" stroke="#f7931e" stroke-width="0.8"/></svg>
<div class="a" style="left:264px;top:446.6px;width:19.6px;height:1.4px;background:#8aafd8;"></div>
<svg class="a" style="left:291px;top:432.5px;" width="12.2" height="12" viewBox="0 0 12.2 12"><rect x="0.5" y="0.5" width="11.2" height="11" rx="1.5" fill="#e8553e"/><path d="M8.5 3 L4 3 L4 9 L8.5 9" fill="none" stroke="#fff" stroke-width="1.4"/></svg>
<div class="a" style="left:287.2px;top:446.6px;width:20.7px;height:1.4px;background:#8aafd8;"></div>
<svg class="a" style="left:543.5px;top:436px;" width="6" height="4" viewBox="0 0 6 4"><path d="M0.5 3.5 L3 1 L5.5 3.5" fill="none" stroke="#fff" stroke-width="0.7"/></svg>
<svg class="a" style="left:554px;top:434.5px;" width="9" height="6" viewBox="0 0 9 6"><path d="M1.5 5.5 Q0 5.5 0.3 4 Q0.6 3 1.8 3 Q2 1 4.5 1 Q6.5 1 7 2.8 Q8.7 2.8 8.7 4.2 Q8.7 5.5 7.3 5.5 Z" fill="#fff"/></svg>
<svg class="a" style="left:566.5px;top:433px;" width="5" height="10" viewBox="0 0 5 10"><rect x="1.2" y="0.5" width="2.6" height="5.5" rx="1.3" fill="#fff"/><path d="M0.5 4.5 Q0.5 7.5 2.5 7.5 Q4.5 7.5 4.5 4.5 M2.5 7.5 L2.5 9.5" fill="none" stroke="#fff" stroke-width="0.6"/></svg>
<div class="t" style="top:434.44px;font-size:6.25px;line-height:8.12px;color:#fff;-webkit-text-stroke:0.08px #fff;left:578.5px;transform-origin:0 50%;transform:scaleX(0.8);"><span style="font-size:4px">℃</span></div>
<svg class="a" style="left:577.5px;top:434.5px;" width="8" height="8" viewBox="0 0 8 8"><path d="M0.5 6 L0.5 2 M2 6 L2 3.5 M3.8 1 L3.8 7.5" stroke="#fff" stroke-width="0.6"/><circle cx="5.8" cy="4.5" r="1.8" fill="none" stroke="#fff" stroke-width="0.5"/></svg>
<svg class="a" style="left:588.5px;top:434.5px;" width="9" height="8" viewBox="0 0 9 8"><rect x="0.5" y="0.5" width="7.5" height="5.5" fill="none" stroke="#fff" stroke-width="0.7"/><path d="M3 7.5 L6 7.5 M0.5 3 L3 3 L3 6" stroke="#fff" stroke-width="0.6" fill="none"/></svg>
<svg class="a" style="left:600.5px;top:434.5px;" width="8" height="8" viewBox="0 0 8 8"><path d="M2 0.5 L4 2 L2 3.5 L0 2 Z M6 0.5 L8 2 L6 3.5 L4 2 Z M2 3.5 L4 5 L2 6.5 L0 5 Z M6 3.5 L8 5 L6 6.5 L4 5 Z M4 5.5 L6 7 L4 8 L2 7 Z" fill="#fff"/></svg>
<svg class="a" style="left:612px;top:434.5px;" width="9" height="8" viewBox="0 0 9 8"><path d="M0.5 2.8 L2 2.8 L4 1 L4 7 L2 5.2 L0.5 5.2 Z" fill="none" stroke="#fff" stroke-width="0.6"/><path d="M5.3 2.5 Q6.3 4 5.3 5.5 M6.5 1.5 Q8.3 4 6.5 6.5" fill="none" stroke="#fff" stroke-width="0.55"/></svg>
<div class="t" style="top:434.65px;font-size:5.875px;line-height:7.64px;color:#ffffff;-webkit-text-stroke:0.08px #ffffff;left:625.7px;transform-origin:0 50%;transform:scaleX(0.8);">ESP</div>
<div class="t" style="top:429.68px;font-size:6.875px;line-height:8.94px;color:#ffffff;left:556px;width:200px;text-align:center;transform-origin:50% 50%;transform:scaleX(0.8);">2:14 p. m.</div>
<div class="t" style="top:438.48px;font-size:6.875px;line-height:8.94px;color:#ffffff;left:556.2px;width:200px;text-align:center;transform-origin:50% 50%;transform:scaleX(0.8);">15/03/2021</div>
<svg class="a" style="left:678.5px;top:433.5px;" width="9" height="9" viewBox="0 0 9 9"><path d="M0.5 0.5 L8.5 0.5 L8.5 6.5 L5 6.5 L3 8.5 L3 6.5 L0.5 6.5 Z" fill="none" stroke="#fff" stroke-width="0.7"/></svg>
<div class="a" style="left:697px;top:427.6px;width:1.4px;height:20.4px;background:#3a3a3a;"></div>
</body></html>
